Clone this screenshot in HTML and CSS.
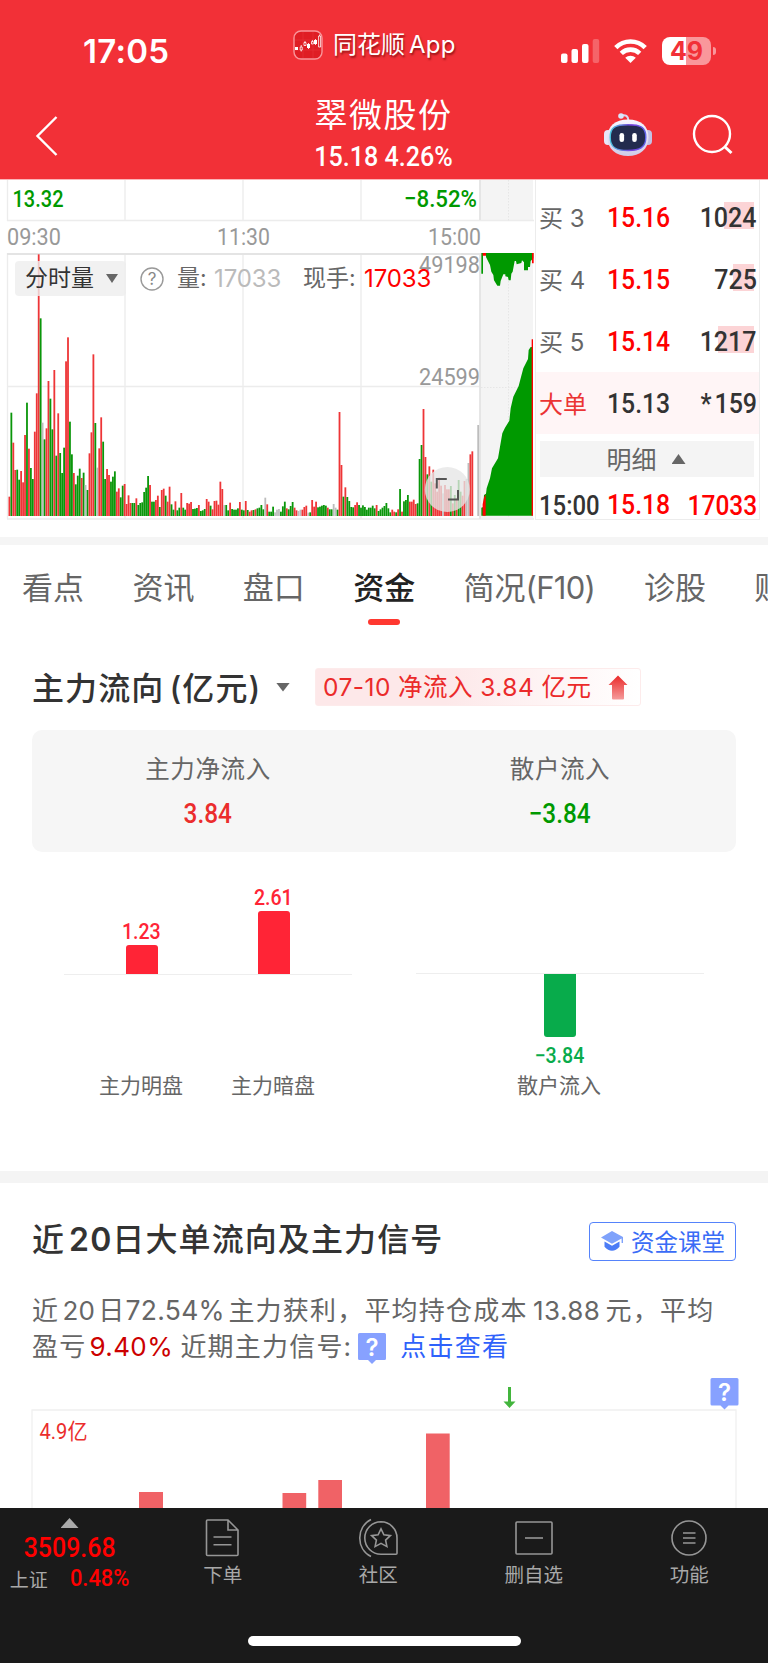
FILE: index.html
```html
<!DOCTYPE html>
<html lang="zh-CN">
  <head>
    <meta charset="UTF-8" />
    <meta name="viewport" content="width=device-width, initial-scale=1.0" />
    <title>翠微股份</title>
    <link rel="stylesheet" href="styles.css">
  </head>
  <body>
    <header class="header">
      <div class="status-bar">
        <div class="clock">17:05</div>
        <div class="app-name">
          <svg class="app-logo" width="30" height="30" viewBox="0 0 30 30">
            <rect x="1" y="1" width="28" height="28" rx="7" fill="#df1d24" stroke="#f9959a" stroke-width="1.4" />
            <path d="M2 10h26M2 20h26M10 2v26M20 2v26" stroke="#e9343a" stroke-width=".6" />
            <path d="M2 17h3v3H2zM14 14h3v4h-3zM21 10h3v4h-3z" fill="#fff" />
            <path d="M7.200 17h2v3h-2zM11 12.500h2v3h-2zM18.500 11.500h1.800v2.500h-1.800zM25.600 6h2v11h-2zM8.200 15v2M8.200 20v1.500M12 11v1.500M19.400 10v1.500M22.500 9v6M15.500 13v6M26.600 4.500v1.500" fill="none" stroke="#fff" stroke-width=".8" />
          </svg>
          <span>同花顺<em>App</em></span>
        </div>
        <div class="status-icons">
          <svg width="39" height="24" viewBox="0 0 39 24" fill="#fff">
            <rect x="0" y="14.500" width="6.500" height="9.500" rx="2" />
            <rect x="10.500" y="10" width="6.500" height="14" rx="2" />
            <rect x="21" y="5" width="6.500" height="19" rx="2" />
            <rect x="31.700" y="0" width="6.500" height="24" rx="2" opacity=".25" />
          </svg>
          <svg class="wifi" width="33" height="24" viewBox="0 0 33 24" fill="none" stroke="#fff" stroke-width="4.600">
            <path d="M1.800 8.600C10 .4 23 .4 31.200 8.600" />
            <path d="M7.300 14.400C12.500 9.300 20.500 9.300 25.700 14.400" />
            <path d="M16.500 24l-5.300-5.200c3-2.800 7.600-2.800 10.600 0z" fill="#fff" stroke="none" />
          </svg>
          <div class="battery"><span>49</span></div>
        </div>
      </div>
      <div class="title-bar">
        <svg class="back" width="24" height="42" viewBox="0 0 24 42" fill="none" stroke="#fff" stroke-width="2.400">
          <path d="M21.500 2L2.500 21l19 19" />
        </svg>
        <div class="stock">
          <h1>翠微股份</h1>
          <p><span class="num">15.18 4.26%</span></p>
        </div>
        <svg class="robot" width="48" height="45" viewBox="0 0 48 45">
          <defs>
            <linearGradient id="shell" x1="0" y1="0" x2="0" y2="1">
              <stop offset="0" stop-color="#f7f5ff" />
              <stop offset="1" stop-color="#cfcbe9" />
            </linearGradient>
            <linearGradient id="rim" x1="0" y1="0" x2="1" y2="0">
              <stop offset="0" stop-color="#49c6df" />
              <stop offset=".6" stop-color="#7a3fe0" />
              <stop offset="1" stop-color="#5d63e8" />
            </linearGradient>
          </defs>
          <path d="M17 3.500c5-1 7 .5 7.500 5" fill="none" stroke="#d9d6ef" stroke-width="2" />
          <circle cx="17" cy="4" r="2.800" fill="#d9e6fa" />
          <rect x="0" y="18" width="8" height="15" rx="4" fill="#e8e6f8" />
          <rect x="40" y="18" width="8" height="15" rx="4" fill="#c3c1e4" />
          <path d="M24 7.500c13 0 20.500 6.500 20.500 18S36 44 24 44 3.500 37 3.500 25.500 11 7.500 24 7.500z" fill="url(#shell)" />
          <path d="M24 12.800c12.500 0 17.800 2.200 17.800 12.400S36 38.500 24 38.500 6.200 35.500 6.200 25.200 11.500 12.800 24 12.800z" fill="#232b4e" stroke="url(#rim)" stroke-width="1.400" />
          <rect x="15.500" y="21" width="4.600" height="9" rx="2.300" fill="#fff" />
          <rect x="28.200" y="21" width="4.600" height="9" rx="2.300" fill="#fff" />
        </svg>
        <svg class="search" width="42" height="42" viewBox="0 0 42 42" fill="none" stroke="#fff" stroke-width="2.400">
          <circle cx="20" cy="20" r="18" />
          <path d="M32.500 32.500l7 6.500" stroke-width="3" />
        </svg>
      </div>
    </header>

    <section class="market">
      <div class="chart">
        <svg width="535" height="341" viewBox="0 180 535 341">
          <rect x="480" y="180" width="53" height="40" fill="#f4f4f4" />
          <rect x="480" y="253" width="53" height="265" fill="#f4f4f4" />
          <g stroke="#ececec" stroke-width="1.300">
            <path d="M7.500 180v41M125 180v41M243 180v41M361 180v41M7 220.500h527" />
            <path d="M7.500 253v266M125 253v266M243 253v266M361 253v266M7 386.500h473M7 519h527" />
          </g>
          <path d="M7 254h474M480 180v40M480 254v265" stroke="#e4e4e4" stroke-width="1.800" />
          <path d="M508.500 180v42M508.500 254v264M481 387.500h52" stroke="#e6e6e6" stroke-dasharray="1.500 1.500" />
          <g id="volume" transform="translate(0 516) scale(.33333)"></g>

          <!-- call auction -->
          <g transform="translate(260 175) scale(.33333)" fill="#009900">
            <path d="M664 234h5v62h-5z" />
            <path d="M678 234h142v16l-8 8-2 18h-6v10h-12v-24l-6-6-2 8-14 4-2-10h-4l-6 32-4 6-2 20h-6l-2-10-8-2v-6h-6l-8 20-2 14h-8l-10-16-2-16-6-10-4-20-6-12-6-12z" />
            <path d="M664 1022v-24l6-2 2-36 6-4 2-16 10-30 6-30 18-30 6-35 7-40 8-17 13-21 4-37 8-35 16-32 8-31 6-22 14-28 2-27 6-9h6v506z" />
            <path d="M668 234h10v8h-10zM816 234h5v31h-5zM815 493h4v529h-4zM668 1022v-34l4-20 5-10v64z" fill="#ff0000" />
          </g>

          <g class="axis-text">
            <text x="12.500" y="207" textLength="51" lengthAdjust="spacingAndGlyphs" class="down">13.32</text>
            <text x="404" y="207" textLength="73" lengthAdjust="spacingAndGlyphs" class="down">−8.52%</text>
            <text x="7" y="244.800" textLength="54" lengthAdjust="spacingAndGlyphs">09:30</text>
            <text x="217" y="244.800" textLength="53" lengthAdjust="spacingAndGlyphs">11:30</text>
            <text x="428" y="244.800" textLength="53" lengthAdjust="spacingAndGlyphs">15:00</text>
            <text x="419" y="273.300" textLength="61" lengthAdjust="spacingAndGlyphs">49198</text>
            <text x="419" y="385" textLength="61" lengthAdjust="spacingAndGlyphs">24599</text>
          </g>

          <circle cx="447.300" cy="489.500" r="22.500" fill="#e6e6e6" fill-opacity=".78" />
          <path d="M436.800 488.500v-9.500h10M448 499.500h10v-9.500" fill="none" stroke="#555" stroke-width="2" />
        </svg>
        <div class="chart-tools">
          <div class="dropdown">分时量<i class="caret"></i></div>
          <svg class="help" width="24" height="24" viewBox="0 0 24 24">
            <circle cx="12" cy="12" r="11" fill="none" stroke="#999" stroke-width="1.400" />
            <text x="12" y="18" text-anchor="middle" font-size="17" fill="#888">?</text>
          </svg>
          <span class="tool-label">量:</span>
          <span class="tool-value">17033</span>
          <span class="tool-label current">现手:</span>
          <span class="tool-value up">17033</span>
        </div>
      </div>

      <div class="orders">
        <div class="order">
          <span class="level">买 3</span>
          <span class="price num up">15.16</span>
          <span class="qty"><i class="depth" style="width: 30px"></i><span class="num">1024</span></span>
        </div>
        <div class="order">
          <span class="level">买 4</span>
          <span class="price num up">15.15</span>
          <span class="qty"><i class="depth" style="width: 21px"></i><span class="num">725</span></span>
        </div>
        <div class="order">
          <span class="level">买 5</span>
          <span class="price num up">15.14</span>
          <span class="qty"><i class="depth" style="width: 36px"></i><span class="num">1217</span></span>
        </div>
        <div class="order big">
          <span class="level">大单</span>
          <span class="price num">15.13</span>
          <span class="qty"><span class="num"><em>*</em>159</span></span>
        </div>
        <div class="detail-toggle"><span>明细</span><i class="caret-up"></i></div>
        <div class="order last">
          <span class="level"><span class="num">15:00</span></span>
          <span class="price num up">15.18</span>
          <span class="qty"><span class="num up">17033</span></span>
        </div>
      </div>
    </section>

    <nav class="tabs">
      <a>看点</a>
      <a>资讯</a>
      <a>盘口</a>
      <a class="active">资金</a>
      <a>简况<span class="f10">(F10)</span></a>
      <a>诊股</a>
      <a>财</a>
    </nav>

    <section class="flow">
      <div class="flow-head">
        <h2>主力流向<span>(亿元)</span></h2>
        <i class="caret"></i>
        <div class="flow-tag">
          <span>07-10 净流入 3.84 亿元</span>
          <svg width="20" height="25" viewBox="0 0 20 25">
            <defs>
              <linearGradient id="arrow" x1="0" y1="0" x2="0" y2="1">
                <stop offset="0" stop-color="#ea2a2a" />
                <stop offset="1" stop-color="#f59b9b" />
              </linearGradient>
            </defs>
            <path d="M10 .5l9.500 9.500h-3.500v13.500q0 1-1 1h-10q-1 0-1-1V10h-3.500z" fill="url(#arrow)" stroke-linejoin="round" />
          </svg>
        </div>
      </div>

      <div class="summary">
        <div>
          <p>主力净流入</p>
          <b class="num">3.84</b>
        </div>
        <div>
          <p>散户流入</p>
          <b class="num green">−3.84</b>
        </div>
      </div>

      <div class="flow-charts">
        <div class="bars">
          <div class="plot">
            <div class="col"><span class="num">1.23</span><i style="height: 29px"></i></div>
            <div class="col"><span class="num">2.61</span><i style="height: 63px"></i></div>
          </div>
          <div class="names"><span>主力明盘</span><span>主力暗盘</span></div>
        </div>
        <div class="bars negative">
          <div class="plot">
            <div class="col"><i style="height: 63px"></i><span class="num">−3.84</span></div>
          </div>
          <div class="names"><span>散户流入</span></div>
        </div>
      </div>
    </section>

    <section class="signal">
      <div class="signal-head">
        <h2>近<span>20</span>日大单流向及主力信号</h2>
        <a class="lesson">
          <svg width="22" height="20" viewBox="0 0 22 20">
            <path d="M11 0l11 6v6h-1.400V7.500L11 12.800 0 6.500z" fill="#7fa2fb" />
            <path d="M3.500 10.500l7.500 4.300 7.500-4.300v5.200q-3.500 4-7.500 4t-7.500-4z" fill="#4c7cf6" />
          </svg>
          资金课堂
        </a>
      </div>
      <p class="desc">
        近<span class="n1">20</span>日<span class="n2">72.54%</span>主力获利，平均持仓成本<span class="n3">13.88</span>元，平均<br>
        盈亏<b>9.40%</b>近期主力信号:<svg class="mark" width="28" height="32" viewBox="0 0 28 32"><path d="M1.500 0h25q1.500 0 1.500 1.500v24q0 1.500-1.500 1.500H18l-4 4-4-4H1.500Q0 27 0 25.500v-24Q0 0 1.500 0z" fill="#87a1ff" /><text x="14" y="22.500">?</text></svg><a>点击查看</a>
      </p>
      <div class="signal-chart">
        <svg width="768" height="132" viewBox="0 1376 768 132">
          <path d="M32 1508v-98h704v98" fill="none" stroke="#f0f0f0" stroke-width="1.300" />
          <g fill="#f06266">
            <rect x="139" y="1492" width="24" height="16" />
            <rect x="282.500" y="1493" width="23.700" height="15" />
            <rect x="318.300" y="1480" width="23.700" height="28" />
            <rect x="426" y="1433.500" width="23.700" height="75" />
          </g>
          <path d="M508 1387h3v14.500h4.500l-6 6.500-6-6.500h4.500z" fill="#43b53d" />
          <path d="M712 1378h25q1.500 0 1.500 1.500v24.500q0 1.500-1.500 1.500h-8.500l-4 4-4-4h-8.500q-1.500 0-1.500-1.500v-24.500q0-1.500 1.500-1.500z" fill="#87a1ff" />
          <text class="mark-text" x="724.500" y="1400.500">?</text>
          <text class="scale-text" x="39.500" y="1439" textLength="48" lengthAdjust="spacingAndGlyphs">4.9亿</text>
        </svg>
      </div>
    </section>

    <footer class="toolbar">
      <div class="index">
        <i class="caret-up"></i>
        <b class="num">3509.68</b>
        <p>上证<span class="num">0.48%</span></p>
      </div>
      <a>
        <svg width="40" height="40" viewBox="0 0 40 40">
          <path d="M4.500 2h20.500l10 10v24.500q0 1-1 1h-29.500q-1 0-1-1v-33.500q0-1 1-1zM25 2v10h10M10.500 19h18M10.500 26.700h18" />
        </svg>
        下单
      </a>
      <a>
        <svg width="40" height="40" viewBox="0 0 40 40">
          <path d="M23 3.800a16.200 16.200 0 0 0 0 32.400h15q1 0 1-1V20a16.200 16.200 0 0 0-16-16.200z" />
          <path d="M13 1.500C-2 9-2 31 13 38.500" />
          <path d="M23 10.800l2.900 6 6.500.8-4.800 4.500 1.300 6.500-5.900-3.200-5.900 3.200 1.300-6.500-4.800-4.500 6.500-.8z" />
        </svg>
        社区
      </a>
      <a>
        <svg width="40" height="40" viewBox="0 0 40 40">
          <rect x="2" y="4" width="36" height="32" rx="1" />
          <path d="M11 20h18" />
        </svg>
        删自选
      </a>
      <a>
        <svg width="40" height="40" viewBox="0 0 40 40">
          <circle cx="20" cy="20" r="17" />
          <path d="M14 15h12.500M14 20h12.500M14 25h12.500" />
        </svg>
        功能
      </a>
      <div class="home-bar"></div>
    </footer>

    <script src="index.js"></script>
  </body>
</html>
```

FILE: styles.css
```css
* {
  margin: 0;
  padding: 0;
  box-sizing: border-box;
}

body {
  width: 768px;
  height: 1663px;
  overflow: hidden;
  background-color: #fff;
  font-family: Inter, "Noto Sans CJK SC", sans-serif;
  color: #333;
}

svg {
  display: block;
  flex: none;
}

i,
em {
  font-style: normal;
}

h1,
h2 {
  font-weight: 500;
}

/* Narrow figures used for prices */
.num {
  display: inline-block;
  font-family: Roboto, "Noto Sans CJK SC", sans-serif;
  font-weight: 500;
  transform: scaleX(0.91);
  white-space: nowrap;
}

.up {
  color: #ff0000;
}

.caret {
  width: 14px;
  height: 9px;
  background-color: #666;
  clip-path: polygon(0 0, 100% 0, 50% 100%);
}

.caret-up {
  width: 14px;
  height: 10px;
  background-color: #666;
  clip-path: polygon(50% 0, 100% 100%, 0 100%);
}

/* Header */
.header {
  height: 180px;
  background-color: #f23037;
  border-bottom: 1px solid #fbb5b8;
  color: #fff;
}

.status-bar {
  display: flex;
  align-items: flex-start;
  height: 95px;
  padding-top: 30px;
}

.clock {
  width: 210px;
  margin-left: 83px;
  padding-top: 1px;
  font-size: 33px;
  font-weight: 600;
  line-height: 40px;
  letter-spacing: 0.3px;
}

.app-name {
  display: flex;
  width: 268px;
  font-size: 24px;
  line-height: 30px;
  text-shadow: 1px 2px 2px rgba(90, 0, 0, 0.6);
}

.app-name span {
  margin-left: 10px;
}

.app-name em {
  margin-left: 4px;
  letter-spacing: 0.2px;
}

.status-icons {
  display: flex;
  align-items: center;
  height: 28px;
  margin-top: 7px;
}

.wifi {
  margin-left: 14px;
}

.battery {
  position: relative;
  width: 49px;
  height: 28px;
  margin-left: 15px;
  border-radius: 8px;
  background: linear-gradient(to right, #fff 50%, #f9979b 50%);
  color: #f23037;
  font-size: 25px;
  font-weight: 700;
  line-height: 28px;
  text-align: center;
}

.battery::after {
  content: "";
  position: absolute;
  top: 10px;
  right: -5px;
  width: 3px;
  height: 8px;
  border-radius: 0 3px 3px 0;
  background-color: #f9979b;
}

.title-bar {
  display: flex;
}

.back {
  margin: 20px 0 0 35px;
}

.stock {
  width: 545px;
  margin-left: 52px;
  text-align: center;
}

.stock h1 {
  font-size: 33px;
  font-weight: 400;
  line-height: 40px;
  letter-spacing: 1.5px;
}

.stock p {
  height: 43px;
  font-size: 27px;
  line-height: 43px;
}

.stock .num {
  transform: scaleX(0.93);
}

.robot {
  margin: 17px 0 0 -52px;
}

.search {
  margin: 19px 0 0 40px;
}

/* Intraday chart and order book */
.market {
  display: flex;
  height: 357px;
}

.chart {
  position: relative;
  width: 535px;
}

.axis-text {
  font-family: Roboto, sans-serif;
  font-size: 24.5px;
  fill: #999;
}

.axis-text .down {
  fill: #009900;
  font-weight: 500;
}

.chart-tools {
  position: absolute;
  top: 81px;
  left: 15px;
  display: flex;
  align-items: center;
  height: 35px;
  font-size: 23px;
  line-height: 35px;
  white-space: nowrap;
}

.dropdown {
  display: flex;
  align-items: center;
  width: 111px;
  height: 35px;
  padding-left: 10px;
  border-radius: 4px;
  background-color: rgba(238, 238, 238, 0.8);
}

.dropdown .caret {
  width: 12px;
  margin-left: 12px;
}

.help {
  margin-left: 14px;
}

.tool-label {
  width: 37px;
  margin-left: 13px;
  color: #666;
}

.tool-label.current {
  width: 61px;
  margin-left: 22px;
}

.tool-value {
  width: 67px;
  font-size: 24px;
  letter-spacing: -0.1px;
  color: #bbb;
}

.tool-value.up {
  color: #ff0000;
}

.orders {
  width: 225px;
  height: 340px;
  padding-top: 6px;
  border: solid #ececec;
  border-width: 0 1.5px 1.5px 1px;
}

.order {
  display: flex;
  align-items: center;
  height: 62px;
  padding-left: 3px;
  font-size: 27.5px;
}

.order.big {
  background-color: #fff5f6;
}

.level {
  width: 68px;
  padding-bottom: 2px;
  font-size: 24px;
  color: #666;
}

.big .level {
  color: #eb3434;
}

.price {
  width: 70px;
  transform: scaleX(0.9);
  transform-origin: left;
}

.qty {
  position: relative;
  flex: 1;
  text-align: right;
}

.qty .num {
  position: relative;
  margin-right: 2px;
  transform-origin: right;
}

.qty em {
  margin-right: 3px;
}

/* Share of the queue, drawn behind the figure */
.depth {
  position: absolute;
  top: 2px;
  right: 5px;
  height: 27px;
  background-color: #fcd4d6;
}

.detail-toggle {
  display: flex;
  justify-content: center;
  align-items: center;
  gap: 15px;
  height: 36px;
  margin: 7px 5px 0 4px;
  padding-right: 2px;
  background-color: #f4f4f4;
  font-size: 25px;
  color: #666;
}

.detail-toggle span {
  padding-bottom: 2px;
}

.order.last {
  height: 55px;
}

.last .num {
  color: #333;
}

.last .num.up {
  color: #ff0000;
}

.last .level {
  padding-bottom: 0;
  font-size: 27.5px;
  white-space: nowrap;
}

.last .level .num {
  transform: scaleX(0.87);
  transform-origin: left;
}

.last .qty .num {
  transform: scaleX(0.89);
}

/* Tabs */
.tabs {
  display: flex;
  gap: 48.4px;
  height: 108px;
  padding: 18px 0 0 22px;
  border-top: 8px solid #f5f5f5;
  overflow: hidden;
  white-space: nowrap;
  font-size: 31px;
  line-height: 50px;
  color: #666;
}

.tabs a {
  flex: none;
}

.tabs .f10 {
  display: inline-block;
  width: 70px;
  letter-spacing: -0.7px;
}

.tabs .active {
  position: relative;
  font-weight: 500;
  color: #222;
}

.tabs .active::after {
  content: "";
  position: absolute;
  top: 56px;
  left: 15px;
  width: 32px;
  height: 6px;
  border-radius: 3px;
  background-color: #ff3830;
}

/* Main capital flow */
.flow {
  height: 538px;
  padding: 23px 32px 0;
  border-bottom: 12px solid #f4f4f4;
}

.flow-head {
  display: flex;
  align-items: center;
  height: 38px;
}

.flow-head h2 {
  width: 244px;
  padding-bottom: 3px;
  font-size: 32px;
  letter-spacing: 1.1px;
  white-space: nowrap;
}

.flow-head h2 span {
  margin-left: 5px;
}

.flow-tag {
  display: flex;
  align-items: center;
  width: 326px;
  height: 38px;
  margin-left: 25px;
  padding-left: 7px;
  border: 1px solid #fdebeb;
  border-radius: 3px;
  background: linear-gradient(to right, #fde8e9 40%, #fff);
  font-size: 24.5px;
  line-height: 36px;
  letter-spacing: 0.45px;
  color: #eb2a2a;
}

.flow-tag span {
  width: 285px;
  white-space: nowrap;
}

.summary {
  display: flex;
  height: 122px;
  margin-top: 24px;
  border-radius: 10px;
  background-color: #f6f6f6;
  text-align: center;
}

.summary div {
  flex: 1;
  padding-top: 20px;
}

.summary p {
  font-size: 24.5px;
  line-height: 38px;
  letter-spacing: 0.6px;
  color: #666;
}

.summary b {
  margin-top: 5px;
  font-size: 28px;
  line-height: 42px;
  color: #eb2d2d;
  transform: scaleX(0.87);
}

.summary b.green {
  color: #009900;
}

.flow-charts {
  display: flex;
  gap: 64px;
  padding: 0 32px;
}

.bars {
  flex: 1;
}

.plot {
  display: flex;
  align-items: flex-end;
  justify-content: center;
  gap: 100px;
  height: 123px;
  padding-right: 1px;
  border-bottom: 1px solid #eee;
}

.col {
  display: flex;
  flex-direction: column;
  align-items: center;
  width: 32px;
  font-size: 21.5px;
  line-height: 26px;
  color: #ff2436;
}

.col i {
  width: 32px;
  border-radius: 3px 3px 0 0;
  background-color: #ff2436;
}

.negative .plot {
  align-items: flex-start;
  height: 90px;
  margin-top: 121px;
  border-top: 1px solid #eee;
  border-bottom: none;
}

.negative .col {
  color: #08ab4b;
}

.negative .col i {
  margin-bottom: 6px;
  border-radius: 0 0 3px 3px;
  background-color: #08ab4b;
}

.names {
  display: flex;
  justify-content: center;
  gap: 48px;
  margin-top: 96px;
  padding-right: 2px;
  font-size: 21px;
  line-height: 30px;
  color: #666;
}

.negative .names {
  margin-top: 8px;
}

/* Large orders, last 20 days */
.signal-head {
  display: flex;
  justify-content: space-between;
  padding: 39px 32px 0;
}

.signal-head h2 {
  font-size: 32px;
  line-height: 35px;
  letter-spacing: 1.1px;
  white-space: nowrap;
}

.signal-head h2 span {
  margin: 0 0 0 4px;
  font-weight: 600;
}

.lesson {
  display: flex;
  align-items: center;
  gap: 8px;
  width: 147px;
  height: 39px;
  padding: 0 0 2px 11px;
  border: 1.5px solid #5583fb;
  border-radius: 4px;
  font-size: 23.5px;
  white-space: nowrap;
  color: #3a6cf6;
}

.desc {
  height: 72px;
  margin: 31px 0 0 32px;
  font-size: 26px;
  line-height: 36px;
  letter-spacing: 1.2px;
  white-space: nowrap;
  color: #666;
}

.desc span {
  display: inline-block;
  text-align: center;
  letter-spacing: 0;
}

.desc .n1 {
  width: 39px;
}

.desc .n2 {
  width: 103px;
  font-size: 26.5px;
  text-align: left;
  letter-spacing: 0.3px;
}

.desc .n3 {
  width: 78px;
  letter-spacing: 0.4px;
}

.desc b {
  display: inline-block;
  width: 94px;
  padding-left: 3px;
  font-weight: 400;
  letter-spacing: 0.4px;
  color: #cc0000;
}

.desc a {
  margin-left: 14px;
  color: #2f62fb;
}

.mark {
  display: inline-block;
  margin-left: 6px;
  vertical-align: -9px;
}

.mark text,
.mark-text {
  fill: #fff;
  font-size: 24px;
  font-weight: 600;
  letter-spacing: 0;
  text-anchor: middle;
}

.signal-chart {
  margin-top: 12px;
}

.scale-text {
  font-family: Roboto, "Noto Sans CJK SC", sans-serif;
  font-size: 22px;
  fill: #eb2d2d;
}

/* Bottom toolbar */
.toolbar {
  position: fixed;
  bottom: 0;
  left: 0;
  display: flex;
  width: 768px;
  height: 155px;
  background-color: #1a1a1a;
  color: #a8a8a8;
}

.toolbar a {
  display: flex;
  flex-direction: column;
  align-items: center;
  width: 155.5px;
  padding-top: 10px;
  font-size: 19.5px;
  line-height: 35px;
}

.toolbar svg {
  fill: none;
  stroke: #969696;
  stroke-width: 1.6;
}

.index {
  display: flex;
  flex-direction: column;
  align-items: center;
  width: 145px;
  padding: 10px 6px 0 0;
}

.index .caret-up {
  width: 18px;
  background-color: #aaa;
}

.index b {
  margin-top: 5px;
  font-size: 28px;
  line-height: 30px;
  color: #ff0000;
  transform: scaleX(0.89);
}

.index p {
  display: flex;
  align-items: center;
  height: 30px;
  padding-left: 3px;
  font-size: 19px;
}

.index p .num {
  margin-left: 19px;
  font-size: 24px;
  color: #ff0000;
}

.home-bar {
  position: absolute;
  bottom: 17px;
  left: 248px;
  width: 273px;
  height: 10px;
  border-radius: 5px;
  background-color: #fff;
}
```

FILE: index.js
```js
// One bar a minute, r = up, g = down, n = unchanged
const bars = `r58 g310 r220 r138 g139 g109 r135 r101 r243 g340 r202 g144 g111 r253 r368 r785 g593 n280 g230 r263
r405 g352 g260 r438 g181 r308 g189 g129 g205 r464 r536 g283 g185 r129 g95 g121 g142 r114 g130 n93
g78 r188 r251 r485 g279 n145 r203 r296 g223 g111 r141 r123 g103 g118 g134 r73 r83 g56 g91 r96
r36 r62 r39 g39 g39 r53 g33 g39 g41 g72 g85 g120 r93 g43 g43 r48 r61 g27 r78 r82
g61 r43 r88 g35 g19 r44 g17 g25 r69 g25 g19 r39 r37 r42 g21 g22 g24 r33 g15 g17
g21 r51 r43 g31 r20 r45 r46 r34 r103 r81 n33 g33 g17 r40 g21 g19 g19 g23 r42 g19
g17 r45 g18 r13 r17 g18 r20 g23 g25 g33 g20 n55 r35 g13 g13 g28 n11 n19 n21 g13
g29 g43 r23 g20 g30 g42 r25 r17 n15 n19 r19 r27 r31 n10 g11 r48 r28 r43 g26 g28
g31 g33 g31 r25 g20 g20 n36 n25 g19 r312 r153 g58 r86 g57 g45 g27 g26 r33 r41 g33
g25 g32 g27 g19 g25 g25 g31 g23 r33 g15 g20 g25 g30 g39 g23 g11 r19 r13 g11 r20
g81 r13 g44 g48 g63 r43 r43 r49 r36 g38 g171 g213 r321 r177 g125 r149 g103 r139 r98 r73
r115 r91 n68 r93 r80 r80 g90 r38 g63 r53 g108 g73 r61 r105 n111 n159 r185 r194 n0 n0
n273`.split(/\s+/);

const colors = { r: "#ee3537", g: "#0a960a", n: "#bdbdbd" };
const volume = document.getElementById("volume");

bars.forEach((bar, i) => {
  const rect = document.createElementNS("http://www.w3.org/2000/svg", "rect");
  const height = Number(bar.slice(1));
  rect.setAttribute("x", (25.5 + i * 5.86).toFixed(2));
  rect.setAttribute("y", -height);
  rect.setAttribute("width", 5.4);
  rect.setAttribute("height", height);
  rect.setAttribute("fill", colors[bar[0]]);
  volume.appendChild(rect);
});
```
